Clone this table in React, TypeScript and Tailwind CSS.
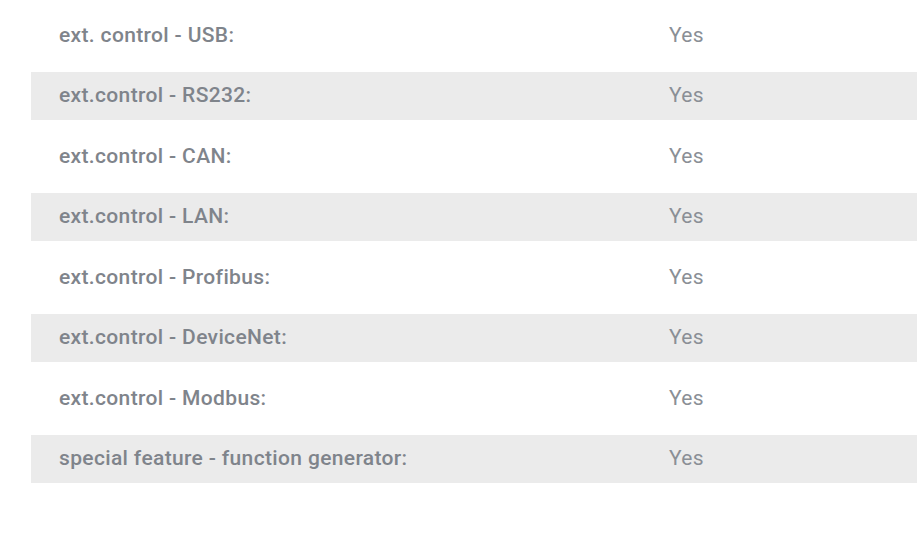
const rows: [string, string][] = [
  ['ext. control - USB:', 'Yes'],
  ['ext.control - RS232:', 'Yes'],
  ['ext.control - CAN:', 'Yes'],
  ['ext.control - LAN:', 'Yes'],
  ['ext.control - Profibus:', 'Yes'],
  ['ext.control - DeviceNet:', 'Yes'],
  ['ext.control - Modbus:', 'Yes'],
  ['special feature - function generator:', 'Yes'],
];

export default function App() {
  return (
    <div className="h-[541px] w-[917px] overflow-hidden bg-white pl-[31px] pt-[11.5px] font-['Roboto',sans-serif]">
      <div className="flex flex-col gap-[12.5px]">
        {rows.map(([label, value], i) => (
          <div
            key={label}
            className={`flex h-12 items-center text-[21px] tracking-[0.35px] ${i % 2 === 1 ? 'bg-[#ebebeb]' : ''}`}
          >
            <div className="w-[638px] pl-[28px] font-medium text-[#7f848b]">{label}</div>
            <div className="text-[#8a8f96]">{value}</div>
          </div>
        ))}
      </div>
    </div>
  );
}
